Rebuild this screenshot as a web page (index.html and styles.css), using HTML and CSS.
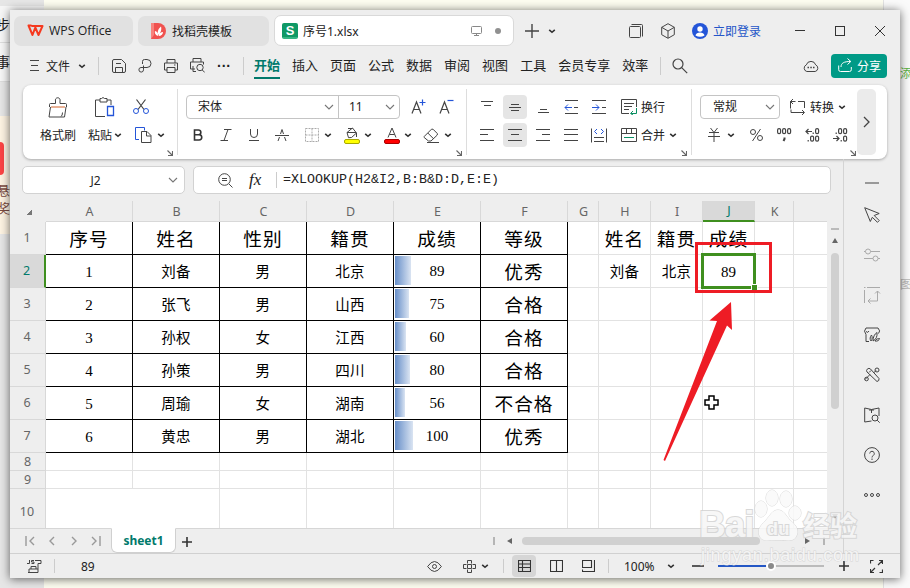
FILE: index.html
```html
<!DOCTYPE html>
<html lang="zh-CN">
<head>
    <meta charset="UTF-8">
    <meta name="viewport" content="width=device-width, initial-scale=1.0">
    <title>序号1.xlsx - WPS Office</title>
    <link rel="stylesheet" href="styles.css">
</head>
<body>
    <svg class="defs">
        <symbol id="caret" viewBox="0 0 8 8"><path d="M1.2 2.8 4 5.3 6.800 2.800" fill="none" stroke="#333" stroke-width="1.600"/></symbol>
        <symbol id="chevron" viewBox="0 0 10 8"><path d="M1 2l4 4 4-4" fill="none" stroke="#777" stroke-width="1.1"/></symbol>
        <symbol id="corner" viewBox="0 0 6 6"><path d="M.5.500 5 5M5.500 1v4.500H1" fill="none" stroke="#666" stroke-width="1.100"/></symbol>
    </svg>

    <!-- страница позади окна -->
    <div class="desktop">
        <div class="desk-left">
            <div class="step">步骤</div>
            <div class="note">事项</div>
            <div class="gray"></div>
            <div class="promo"><i></i><span>悬</span><span>奖</span></div>
        </div>
        <div class="desk-mid"></div>
        <div class="desk-right"><span class="add">添</span><span class="pic">图</span></div>
    </div>

    <div class="window">
        <header class="titlebar">
            <div class="tab tab-home">
                <svg width="17" height="13" viewBox="0 0 17 13" fill="none" stroke="#f5391f" stroke-width="2" stroke-linejoin="round"><path d="M4.500 2H15.500L11.500 11 8.300 3.500 5.500 11 1.500 1.500H4.500"/></svg>
                <span>WPS Office</span>
            </div>
            <div class="tab tab-docer">
                <svg width="15" height="16" viewBox="0 0 15 16"><path d="M0 0h7a8 8 0 0 1 0 16H0z" fill="#f0524f"/><path d="M0 0h3v12l-3 4z" fill="#f8827c"/><path d="M7 13C4 12 3.500 9.500 4 8c2 .5 3 2 3 5zM7 12C6 8 8 5 10 3.500 11 7 9.500 10.500 7 12zM7.500 13c.5-3 2.500-4 4.500-4 0 2-1.500 4-4.500 4z" fill="#fff"/></svg>
                <span>找稻壳模板</span>
            </div>
            <div class="tab tab-file">
                <span class="s-logo">S</span>
                <span class="file-name">序号1.xlsx</span>
                <svg width="11" height="10" viewBox="0 0 11 10" fill="none" stroke="#888"><rect x=".5" y=".5" width="10" height="7" rx="1"/><path d="M5.500 7.500v2M3 9.500h5"/></svg>
                <i class="dirty"></i>
            </div>
            <div class="new-tab">
                <svg width="14" height="14" viewBox="0 0 14 14" stroke="#444" stroke-width="1.400"><path d="M7 0v14M0 7h14"/></svg>
                <svg width="8" height="8"><use href="#caret"/></svg>
            </div>
            <div class="win-tools">
                <svg width="14" height="14" viewBox="0 0 14 14" fill="none" stroke="#444"><rect x=".5" y="2.500" width="11" height="11" rx="1"/><path d="M2.500.5h10a1 1 0 0 1 1 1v11"/></svg>
                <svg width="14" height="16" viewBox="0 0 14 16" fill="none" stroke="#444"><path d="M7 .7l6.300 3.600v7.400L7 15.300.700 11.700V4.300zM.700 4.300 7 8l6.300-3.700M7 8v7"/></svg>
                <a class="login" href="#"><svg width="16" height="16" viewBox="0 0 16 16"><circle cx="8" cy="8" r="8" fill="#2455d8"/><circle cx="8" cy="6" r="2.700" fill="#fff"/><path d="M3.500 12.500c.5-4 8.500-4 9 0q-4.500 2.600-9 0z" fill="#fff"/></svg>立即登录</a>
            </div>
            <div class="win-buttons">
                <svg width="10" height="10" viewBox="0 0 10 10" stroke="#333"><path d="M0 4.500h10"/></svg>
                <svg width="10" height="10" viewBox="0 0 10 10" fill="none" stroke="#333"><rect x=".5" y=".5" width="9" height="9"/></svg>
                <svg width="10" height="10" viewBox="0 0 10 10" stroke="#333"><path d="M0 0l10 10M10 0L0 10"/></svg>
            </div>
        </header>

        <nav class="menubar">
            <svg class="burger" width="9" height="11" viewBox="0 0 9 11" stroke="#444"><path d="M0 .5h9M1 5.500h7M0 10.500h9"/></svg>
            <span class="file-menu">文件</span>
            <svg width="8" height="8"><use href="#caret"/></svg>
            <i class="sep sep-file"></i>
            <div class="quick">
                <svg width="14" height="14" viewBox="0 0 14 14" fill="none" stroke="#444"><path d="M.5 12V2A1.500 1.500 0 0 1 2 .5h7.500l4 4V12a1.500 1.500 0 0 1-1.500 1.500H2A1.500 1.500 0 0 1 .5 12zM3.500 13.500V8.500h7v5M4 4.500h5"/></svg>
                <svg width="14" height="14" viewBox="0 0 14 14" fill="none" stroke="#444"><path d="M4.500 5V2.500q0-2 2-2h2.500a4 4 0 0 1 0 8H3a2.300 2.300 0 1 0 2.500 2.300V6.500"/></svg>
                <svg width="14" height="14" viewBox="0 0 14 14" fill="none" stroke="#444"><path d="M3 4V.500h8V4M3 11H.500V4h13v7H11M3 8.500h8v5H3zM10 6h1.500"/></svg>
                <svg width="15" height="15" viewBox="0 0 15 15" fill="none" stroke="#444"><path d="M3 4V.500h8V4M5 11H.500V4h13v2.500M3 8v5.500h3"/><circle cx="10" cy="9.500" r="3.200"/><path d="M12.300 12l2.500 2.500"/></svg>
                <span class="dots">···</span>
            </div>
            <i class="sep"></i>
            <ul>
                <li class="current">开始</li>
                <li>插入</li>
                <li>页面</li>
                <li>公式</li>
                <li>数据</li>
                <li>审阅</li>
                <li>视图</li>
                <li>工具</li>
                <li>会员专享</li>
                <li>效率</li>
            </ul>
            <i class="sep"></i>
            <svg class="search" width="16" height="16" viewBox="0 0 16 16" fill="none" stroke="#444" stroke-width="1.200"><circle cx="6" cy="6" r="5"/><path d="M9.700 9.700l5.500 5.500"/></svg>
            <svg class="cloud" width="16" height="14" viewBox="0 0 16 14" fill="none" stroke="#444"><path d="M3.800 12.500a3.500 3.500 0 0 1-.5-6.600 4.900 4.900 0 0 1 9.400 0 3.500 3.500 0 0 1-.5 6.600z"/><path d="M4.500 8.500H6M7.300 8.500h1.500M10 8.500h1.500" stroke-width="1.500"/></svg>
            <button class="share"><svg width="14" height="14" viewBox="0 0 14 14" fill="none" stroke="#fff"><path d="M.7 7.500v4.200a1.800 1.800 0 0 0 1.800 1.800h9a1.800 1.800 0 0 0 1.800-1.800V9M3 9c0-4 3-5.500 9.500-5.500M9.500.5l3.300 3-3.300 3"/></svg>分享</button>
        </nav>

        <section class="ribbon">
            <div class="group g-clip">
                <div class="big">
                    <svg width="20" height="21" viewBox="0 0 20 21" fill="none" stroke="#444"><path d="M1.500 10V7.500q0-1 1-1h5V4a2.400 2.400 0 1 1 4.500 0v2.500h5.500q1 0 1 1V10M2.500 10 1 20h15.500l1.500-10"/><path d="M13 19.500q1.500-1 1.500-4"/><path d="M3 10h14" stroke="#d2622a"/></svg>
                    <span>格式刷</span>
                </div>
                <div class="big">
                    <svg width="20" height="21" viewBox="0 0 20 21" fill="none" stroke="#444"><path d="M5 3H.500v16.500H10M12 3h4v5M5 1.500h1.500Q8-.5 9.500 1.500H12V5H5z"/><path d="M12.500 9.500h6v9h-6z" stroke="#2455d8" stroke-width="1.300"/></svg>
                    <span>粘贴<svg width="8" height="8"><use href="#caret"/></svg></span>
                </div>
                <div class="stack">
                    <div class="tb cut"><svg width="16" height="16" viewBox="0 0 16 16" fill="none"><path d="M3.500.5l7.500 10M12.500.5L5 10.500" stroke="#444" stroke-width="1.200"/><circle cx="3" cy="12" r="2.500" stroke="#2455d8"/><circle cx="13" cy="12" r="2.500" stroke="#2455d8"/></svg></div>
                    <div class="tb copy"><svg width="17" height="16" viewBox="0 0 17 16" fill="none"><path d="M4 12.500H.500v-12h9v3" stroke="#2455d8"/><path d="M6.500 4.500H12l4 4v7H6.500zM11.500 4.500V9H16" stroke="#444"/></svg><svg width="8" height="8"><use href="#caret"/></svg></div>
                </div>
                <svg class="corner" width="6" height="6"><use href="#corner"/></svg>
            </div>

            <div class="group g-font">
                <div class="row">
                    <div class="combo">
                        <div class="font-name">宋体<svg width="10" height="8"><use href="#chevron"/></svg></div>
                        <div class="font-size">11<svg width="10" height="8"><use href="#chevron"/></svg></div>
                    </div>
                    <div class="tb"><svg width="16" height="16" viewBox="0 0 16 16" fill="none"><path d="M1 14.500 5.500 3 10 14.500M2.500 10.500h6" stroke="#444" stroke-width="1.200"/><path d="M8.500 3.500h6M11.500.5v6" stroke="#2455d8" stroke-width="1.200"/></svg></div>
                    <div class="tb"><svg width="16" height="16" viewBox="0 0 16 16" fill="none"><path d="M1 14.500 5.500 3 10 14.500M2.500 10.500h6" stroke="#444" stroke-width="1.200"/><path d="M8.500 1.500h6" stroke="#2455d8" stroke-width="1.200"/></svg></div>
                </div>
                <div class="row">
                    <div class="tb"><svg width="10" height="12" viewBox="0 0 10 12" fill="none" stroke="#333" stroke-width="1.600"><path d="M1.500 1h4a2.300 2.300 0 0 1 0 4.700h-4zM1.500 5.700h4.600a2.600 2.600 0 0 1 0 5.300H1.500z"/></svg></div>
                    <div class="tb"><svg width="12" height="12" viewBox="0 0 12 12" fill="none" stroke="#444"><path d="M4 .5h7.500M.5 11.500H8M8 .5l-4 11"/></svg></div>
                    <div class="tb"><svg width="10" height="12" viewBox="0 0 10 12" fill="none" stroke="#444"><path d="M1.500 0v5a3.500 3.500 0 0 0 7 0V0M0 11.500h10"/></svg></div>
                    <div class="tb"><svg width="14" height="12" viewBox="0 0 14 12" fill="none" stroke="#444"><path d="M3 12l1.500-4M5.500 5L7 .5 8.500 5M9.500 8l1.500 4M0 6.500h14"/></svg></div>
                    <div class="tb drop first-drop"><svg width="14" height="14" viewBox="0 0 14 14" fill="none" stroke="#aaa" stroke-dasharray="2 1"><path d="M.5.5h13v13H.500zM7 .5v13M.5 7h13"/></svg><svg width="8" height="8"><use href="#caret"/></svg></div>
                    <div class="tb drop"><svg width="16" height="17" viewBox="0 0 16 17" fill="none" stroke="#444"><path d="M3 5.500 8.500 1l4 5-5 4.500-3 .2zM3 5.500h9M4 1.500h4.500M12.500 6v4"/><rect x=".5" y="12.500" width="15" height="4" rx="1.500" fill="#ff0" stroke="#a8a800"/></svg><svg width="8" height="8"><use href="#caret"/></svg></div>
                    <div class="tb drop"><svg width="16" height="17" viewBox="0 0 16 17" fill="none" stroke="#444"><path d="M4 10.500 8 1l4 9.500M5.500 7.500h5"/><rect x=".5" y="12.500" width="15" height="4" rx="1.500" fill="#f00" stroke="#a80000"/></svg><svg width="8" height="8"><use href="#caret"/></svg></div>
                    <div class="tb drop"><svg width="18" height="15" viewBox="0 0 18 15" fill="none" stroke="#444"><path d="M1.200 8.500 8.500 1.200h1.500l4.300 4.300v1.500L8 13H5.500L1.200 9.500zM4.800 5l6 6M4 14.500h12"/></svg><svg width="8" height="8"><use href="#caret"/></svg></div>
                </div>
                <svg class="corner" width="6" height="6"><use href="#corner"/></svg>
            </div>

            <div class="group g-align">
                <div class="row">
                    <div class="tb"><svg width="14" height="14" viewBox="0 0 14 14" stroke="#444"><path d="M1 1.500h12M4 5.500h7"/></svg></div>
                    <div class="tb on"><svg width="14" height="14" viewBox="0 0 14 14" stroke="#444"><path d="M3 4.500h8M1 7.500h12M3 10.500h8"/></svg></div>
                    <div class="tb"><svg width="14" height="14" viewBox="0 0 14 14" stroke="#444"><path d="M4 9.500h7M2 12.500h11"/></svg></div>
                    <div class="tb"><svg width="14" height="14" viewBox="0 0 14 14" fill="none" stroke="#444"><path d="M1 .5h13M1 13.500h13M10 7.500h4"/><path d="M8 7.500H1M4 4.500l-3 3 3 3" stroke="#2455d8"/></svg></div>
                    <div class="tb"><svg width="14" height="14" viewBox="0 0 14 14" fill="none" stroke="#444"><path d="M0 .5h14M0 13.500h14M10 7.500h4"/><path d="M0 7.500h7M4 4.500l3 3-3 3" stroke="#2455d8"/></svg></div>
                    <div class="tb wide"><svg width="16" height="16" viewBox="0 0 16 16" fill="none" stroke="#444"><path d="M8 14.500H.500V.5h15V8M3 4.500h10M3 7.500h8M3 10.500h5"/><path d="M15.500 9v5.500H10M12 12l-2.500 2.500L12 16" stroke="#0a8f62"/></svg>换行</div>
                </div>
                <div class="row">
                    <div class="tb"><svg width="14" height="12" viewBox="0 0 14 12" stroke="#444"><path d="M0 .5h14M0 5.500h8M0 11.500h14"/></svg></div>
                    <div class="tb on"><svg width="14" height="12" viewBox="0 0 14 12" stroke="#444"><path d="M0 .5h14M3 5.500h8M0 11.500h14"/></svg></div>
                    <div class="tb"><svg width="14" height="12" viewBox="0 0 14 12" stroke="#444"><path d="M0 .5h14M6 5.500h8M0 11.500h14"/></svg></div>
                    <div class="tb"><svg width="14" height="12" viewBox="0 0 14 12" stroke="#444"><path d="M0 .5h14M0 5.500h14M0 11.500h14"/></svg></div>
                    <div class="tb"><svg width="16" height="15" viewBox="0 0 16 15" fill="none" stroke="#444"><path d="M.5.5v14M15.500.5v14M3 9.500h10M3 13.500h10"/><path d="M6 1L3.500 3.500 6 6M10 1l2.500 2.500L10 6" stroke="#2455d8"/></svg></div>
                    <div class="tb wide"><svg width="16" height="14" viewBox="0 0 16 14" fill="none" stroke="#444"><path d="M.5.5h15v13H.500zM.5 5.500h15M5.500.5v5M10.500.5v5"/><path d="M3 9.500h10" stroke="#0a8f62"/></svg>合并<svg width="8" height="8"><use href="#caret"/></svg></div>
                </div>
                <svg class="corner" width="6" height="6"><use href="#corner"/></svg>
            </div>

            <div class="group g-num">
                <div class="row">
                    <div class="combo num-format">常规<svg width="10" height="8"><use href="#chevron"/></svg></div>
                    <div class="tb wide"><svg width="16" height="16" viewBox="0 0 16 16" fill="none" stroke="#444"><path d="M.5 9.500v-7h5M3 0L.500 2.500 3 5M8 2.500h6.500V9M1 10.500v3h13M12 11l2.500 2.500L12 16"/></svg>转换<svg width="8" height="8"><use href="#caret"/></svg></div>
                </div>
                <div class="row">
                    <div class="tb drop"><svg width="12" height="14" viewBox="0 0 12 14" fill="none" stroke="#444"><path d="M2.500 0 6 4.500 9.500 0M1 4.500h10M0 8.500h12M6 4.500V14"/></svg><svg width="8" height="8"><use href="#caret"/></svg></div>
                    <div class="tb"><svg width="13" height="12" viewBox="0 0 13 12" fill="none" stroke="#444"><circle cx="3" cy="3" r="2.500"/><circle cx="10" cy="9" r="2.500"/><path d="M10.500 0l-8 12"/></svg></div>
                    <div class="tb"><svg width="15" height="14" viewBox="0 0 15 14" fill="none" stroke="#444" stroke-width="1.200"><rect x=".6" y=".6" width="3" height="5" rx="1.400"/><rect x="5.600" y=".6" width="3" height="5" rx="1.400"/><rect x="10.600" y=".6" width="3" height="5" rx="1.400"/><path d="M7.500 9.500v1.500l-1 2" stroke-width="2"/></svg></div>
                    <div class="tb"><svg width="15" height="14" viewBox="0 0 15 14" fill="none" stroke="#444" stroke-width="1.200"><path d="M7 3.500H1M3.500 1 1 3.500 3.500 6M8.200 4.500V6M3.200 12v1.500"/><rect x="10.600" y=".6" width="3" height="5" rx="1.400"/><rect x="5.600" y="8.100" width="3" height="5" rx="1.400"/><rect x="10.600" y="8.100" width="3" height="5" rx="1.400"/></svg></div>
                    <div class="tb"><svg width="15" height="14" viewBox="0 0 15 14" fill="none" stroke="#444" stroke-width="1.200"><path d="M0 10.500h6M3.500 8 6 10.500 3.500 13M3.200 4.500V6M8.200 12v1.500"/><rect x="5.600" y=".6" width="3" height="5" rx="1.400"/><rect x="10.600" y=".6" width="3" height="5" rx="1.400"/><rect x="10.600" y="8.100" width="3" height="5" rx="1.400"/></svg></div>
                </div>
                <svg class="corner" width="6" height="6"><use href="#corner"/></svg>
            </div>
            <div class="more"><svg width="7" height="12" viewBox="0 0 7 12" fill="none" stroke="#444" stroke-width="1.300"><path d="M1 1l5 5-5 5"/></svg></div>
        </section>

        <div class="work">
            <div class="editor">
                <div class="formula-bar">
                    <div class="name-box"><span>J2</span><svg width="10" height="8"><use href="#chevron"/></svg></div>
                    <div class="formula">
                        <svg width="15" height="15" viewBox="0 0 15 15" fill="none" stroke="#444"><circle cx="6.500" cy="6.500" r="5.800"/><path d="M4 5.500h5M4 7.500h5M11 11l3.500 3.500"/></svg>
                        <span class="fx">fx</span>
                        <code>=XLOOKUP(H2&amp;I2,B:B&amp;D:D,E:E)</code>
                    </div>
                </div>
                <div class="sheet">
                    <table>
                        <colgroup>
                            <col class="c-head"><col class="c-l"><col class="c-l"><col class="c-l"><col class="c-l"><col class="c-l"><col class="c-l">
                            <col class="c-g"><col class="c-m"><col class="c-m"><col class="c-m"><col class="c-k"><col class="c-rest">
                        </colgroup>
                        <tr class="letters">
                            <th><i class="select-all"></i></th>
                            <th>A</th><th>B</th><th>C</th><th>D</th><th>E</th><th>F</th><th>G</th><th>H</th><th>I</th><th class="sel">J</th><th>K</th><th></th>
                        </tr>
                        <tr class="title">
                            <th>1</th>
                            <td class="b">序号</td><td class="b">姓名</td><td class="b">性别</td><td class="b">籍贯</td><td class="b">成绩</td><td class="b">等级</td>
                            <td></td><td>姓名</td><td>籍贯</td><td>成绩</td><td></td><td></td>
                        </tr>
                        <tr>
                            <th class="sel">2</th>
                            <td class="b n">1</td><td class="b">刘备</td><td class="b">男</td><td class="b">北京</td>
                            <td class="b n"><div class="score"><i style="width: 16px"></i><span>89</span></div></td><td class="b grade">优秀</td>
                            <td></td><td>刘备</td><td>北京</td><td class="n">89</td><td></td><td></td>
                        </tr>
                        <tr>
                            <th>3</th>
                            <td class="b n">2</td><td class="b">张飞</td><td class="b">男</td><td class="b">山西</td>
                            <td class="b n"><div class="score"><i style="width: 14px"></i><span>75</span></div></td><td class="b grade">合格</td>
                            <td></td><td></td><td></td><td></td><td></td><td></td>
                        </tr>
                        <tr>
                            <th>4</th>
                            <td class="b n">3</td><td class="b">孙权</td><td class="b">女</td><td class="b">江西</td>
                            <td class="b n"><div class="score"><i style="width: 11px"></i><span>60</span></div></td><td class="b grade">合格</td>
                            <td></td><td></td><td></td><td></td><td></td><td></td>
                        </tr>
                        <tr>
                            <th>5</th>
                            <td class="b n">4</td><td class="b">孙策</td><td class="b">男</td><td class="b">四川</td>
                            <td class="b n"><div class="score"><i style="width: 15px"></i><span>80</span></div></td><td class="b grade">合格</td>
                            <td></td><td></td><td></td><td></td><td></td><td></td>
                        </tr>
                        <tr>
                            <th>6</th>
                            <td class="b n">5</td><td class="b">周瑜</td><td class="b">女</td><td class="b">湖南</td>
                            <td class="b n"><div class="score"><i style="width: 10px"></i><span>56</span></div></td><td class="b grade">不合格</td>
                            <td></td><td></td><td></td><td></td><td></td><td></td>
                        </tr>
                        <tr>
                            <th>7</th>
                            <td class="b n">6</td><td class="b">黄忠</td><td class="b">男</td><td class="b">湖北</td>
                            <td class="b n"><div class="score"><i style="width: 18px"></i><span>100</span></div></td><td class="b grade">优秀</td>
                            <td></td><td></td><td></td><td></td><td></td><td></td>
                        </tr>
                        <tr class="low"><th>8</th><td></td><td></td><td></td><td></td><td></td><td></td><td></td><td></td><td></td><td></td><td></td><td></td></tr>
                        <tr class="low"><th>9</th><td></td><td></td><td></td><td></td><td></td><td></td><td></td><td></td><td></td><td></td><td></td><td></td></tr>
                        <tr class="last"><th>10</th><td colspan="2"></td><td></td><td></td><td></td><td></td><td></td><td></td><td></td><td></td><td></td><td></td></tr>
                    </table>
                    <div class="vscroll">
                        <i class="split"></i>
                        <i class="up"></i>
                        <i class="thumb"></i>
                        <i class="down"></i>
                    </div>
                </div>
                <div class="sheet-tabs">
                    <div class="sheet-nav">
                        <svg width="10" height="10" viewBox="0 0 10 10"><path d="M1 0v10M9 1L5 5l4 4"/></svg>
                        <svg width="10" height="10" viewBox="0 0 10 10"><path d="M7 1L3 5l4 4"/></svg>
                        <svg width="10" height="10" viewBox="0 0 10 10"><path d="M3 1l4 4-4 4"/></svg>
                        <svg width="10" height="10" viewBox="0 0 10 10"><path d="M9 0v10M1 1l4 4-4 4"/></svg>
                    </div>
                    <div class="sheet-tab">sheet1</div>
                    <svg class="add-sheet" width="10" height="10" viewBox="0 0 10 10" stroke="#333" stroke-width="1.600"><path d="M5 0v10M0 5h10"/></svg>
                    <div class="hscroll">
                        <i class="grip"></i>
                        <i class="left"></i>
                        <i class="thumb"></i>
                        <i class="right"></i>
                        <i class="grip"></i>
                    </div>
                </div>
            </div>
            <aside class="rail">
                <svg class="fold" viewBox="0 0 16 16"><path d="M1 8h14"/></svg>
                <svg viewBox="0 0 16 16"><path d="M.7.700l14.500 5.800-5 2 5 5-1.700 1.800-5.200-5-2 4.200z"/></svg>
                <svg class="dim" viewBox="0 0 16 16"><circle cx="4" cy="4.500" r="2.500"/><circle cx="11.500" cy="11.500" r="2.500"/><path d="M0 4.500h1.500M6.500 4.500H16M0 11.500h9M14 11.500h2"/></svg>
                <svg class="dim" viewBox="0 0 16 16"><path d="M.5 3v13M3 .5h13M0 .5h1.500M13.500 4v10H4M11 6.500 13.500 4 16 6.500M6.500 11.500 4 14l2.500 2.500"/></svg>
                <svg viewBox="0 0 16 16"><path d="M5 14.500H2V7.500Q-1 4 2 1h12Q17 4 14.500 6.500M2 4.500q2 2 3-.5M7 14c-1.500-2-1-4 .5-6 1 2 1 4-.5 6zM9 14c0-4 1.500-7 4-8.500.5 4-1 7-4 8.500zM11 14c1-2 3-2.500 4.500-2.500-.5 2-2 3-4.500 2.500z"/></svg>
                <svg viewBox="0 0 16 16"><path d="M3.200 2.200Q5 .5 6.500 2l8.500 9.500q.5 2.500-2 3L3 5Q2 3.500 3.200 2.200zM5 5.500 7 3.500M1 12.500l5-5M9.500 6 12 3.500"/><circle cx="13" cy="3" r="2"/><circle cx="2.500" cy="12" r="1.800"/></svg>
                <svg viewBox="0 0 16 16"><path d="M7.500 14 .700 15V1L7.500 2.500 15 1v8M7.500 2.500V6M5 3h5"/><circle cx="11" cy="11" r="3"/><path d="M13.200 13.200l2.500 2.500"/></svg>
                <svg viewBox="0 0 16 16"><circle cx="8" cy="8" r="7.400"/><path d="M5.700 6.500a2.300 2.300 0 1 1 3.600 2Q8 9.200 8 10.500M8 11.500v1.500"/></svg>
                <svg viewBox="0 0 16 16"><circle cx="2" cy="8" r="1.500"/><circle cx="8" cy="8" r="1.500"/><circle cx="14" cy="8" r="1.500"/></svg>
            </aside>
        </div>

        <footer class="status">
            <svg class="macro" width="15" height="13" viewBox="0 0 15 13" fill="none" stroke="#444"><path d="M2.500 0v3.500H0M7 .5H4.500v1.500H7v1.500H4.500M8 .5h6v3h-3v9H2V9h9M4 9V6.500h5V9M1 12.500h10"/></svg>
            <i class="sep"></i>
            <span class="sum">89</span>
            <svg width="15" height="11" viewBox="0 0 15 11" fill="none" stroke="#444"><path d="M.6 5.500q6.900-10 13.800 0-6.900 10-13.800 0z"/><circle cx="7.500" cy="5.500" r="2"/></svg>
            <svg class="cross" width="13" height="13" viewBox="0 0 13 13" fill="none" stroke="#444"><path d="M4.500 3.500v-3h4v3M4.500 9.500v3h4v-3M3.500 4.500h-3v4h3M9.500 4.500h3v4h-3M4.500 4.500h4v4h-4z"/></svg>
            <svg class="cross-caret" width="8" height="8"><use href="#caret"/></svg>
            <i class="sep"></i>
            <div class="views">
                <div class="view on"><svg width="13" height="12" viewBox="0 0 13 12"><path d="M.5.5h12v11H.500zM.5 4h12M.5 7.500h12M4.500.5v11"/></svg></div>
                <div class="view"><svg width="13" height="12" viewBox="0 0 13 12"><path d="M.5.5h12v11H.500zM6.500.5v11"/></svg></div>
                <div class="view"><svg width="13" height="12" viewBox="0 0 13 12"><path d="M.5.5h9v7h-9zM12.500 0v11.500H0M.5 9.500v2"/></svg></div>
            </div>
            <i class="sep"></i>
            <span class="zoom">100%</span>
            <svg width="8" height="8"><use href="#caret"/></svg>
            <svg class="minus" width="12" height="4" viewBox="0 0 12 4" stroke="#333" stroke-width="1.600"><path d="M0 2h12"/></svg>
            <div class="slider"><i class="done"></i><i class="knob"></i></div>
            <svg class="plus" width="10" height="10" viewBox="0 0 10 10" stroke="#333" stroke-width="1.600"><path d="M5 0v10M0 5h10"/></svg>
            <svg class="full" width="13" height="13" viewBox="0 0 13 13" fill="none" stroke="#333" stroke-width="1.200"><path d="M.5 3.500v-3h3M12.500 9.500v3h-3M9 .5h3.500V4M12.500.5 8 5M.5 9v3.500H4M.5 12.500 5 8"/></svg>
        </footer>
    </div>

    <!-- выделение и стрелка поверх листа -->
    <svg class="marks" width="910" height="588" viewBox="0 0 910 588">
        <rect x="702.500" y="254.500" width="52" height="33" fill="none" stroke="#3f8f1f" stroke-width="3"/>
        <path d="M751 284h7v7h-7z" fill="#fff"/>
        <path d="M752 285h5v5h-5z" fill="#3f8f1f"/>
        <rect x="696.500" y="243.500" width="74" height="48" fill="none" stroke="#ee1c25" stroke-width="3"/>
        <path d="M731 302l1 28-5-4.500L665 461l-1.500-1L717 321l-7.500-.5z" fill="#ee1c25"/>
        <path d="M709 396h5v4h4v5h-4v4h-5v-4h-4v-5h4z" fill="#fff" stroke="#000" stroke-width="1.500"/>
    </svg>

    <div class="watermark">
        <div class="brand">
            <span class="bai">Bai</span>
            <span class="paw"><svg width="50" height="54" viewBox="0 0 50 54"><ellipse cx="8" cy="20" rx="6" ry="8"/><ellipse cx="19" cy="9" rx="6" ry="8"/><ellipse cx="33" cy="10" rx="6" ry="8"/><ellipse cx="42" cy="24" rx="6" ry="7"/><path d="M25 21c6 0 8 6 12 10 8 7 9 11 6 17-3 5-9 3-18 3s-15 2-18-3c-3-6-1-10 6-17 4-4 6-10 12-10z"/></svg><b>du</b></span>
            <span class="jy">经验</span>
        </div>
        <div class="url">jingyan.baidu.com</div>
    </div>
</body>
</html>
```
FILE: styles.css
```css
* {
    margin: 0;
    padding: 0;
    box-sizing: border-box;
}

body {
    position: relative;
    width: 910px;
    height: 588px;
    overflow: hidden;
    font-family: "Noto Sans", "Noto Sans CJK SC", sans-serif;
    font-size: 12px;
    color: #222;
}

svg {
    display: block;
    flex: none;
}

.defs {
    position: absolute;
    width: 0;
    height: 0;
}

/* Фон */
.desktop {
    display: grid;
    grid-template-columns: 44px 839px 1fr;
    height: 588px;
}

.desk-left {
    background: #e6e6e6;
    padding-top: 6px;
    font-size: 14px;
    overflow: hidden;
}

.step, .note {
    height: 37px;
    line-height: 37px;
    margin-left: -4px;
    background: #f6f6f6;
    border-bottom: 1px solid #ddd;
    white-space: nowrap;
}

.note {
    height: 39px;
}

.gray {
    height: 34px;
}

.promo {
    height: 118px;
    background: #fdf3e2;
    color: #7a4a40;
    font-size: 13px;
    line-height: 18px;
}

.promo i {
    display: block;
    width: 4px;
    height: 33px;
    margin-bottom: 6px;
    border-radius: 0 4px 4px 0;
    background: #fb4444;
    transform: translateY(26px);
}

.promo span {
    display: block;
    margin-left: -3px;
    transform: translateY(26px);
}

.desk-mid {
    background: #fdfdf0;
}

.desk-right {
    background: #fafafa;
    border-left: 1px solid #e2e2e2;
    padding: 64px 0 0 16px;
    font-size: 12px;
    line-height: 20px;
    overflow: hidden;
}

.desk-right span {
    display: block;
    width: 14px;
}

.add {
    color: #5bb544;
}

.pic {
    margin-top: 191px;
    color: #bbb;
}

/* Окно */
.window {
    position: absolute;
    left: 10px;
    top: 10px;
    width: 890px;
    height: 568px;
    display: flex;
    flex-direction: column;
    background: #eee;
    box-shadow: 0 1px 9px rgba(0, 0, 0, 0.6);
}

.titlebar {
    display: flex;
    align-items: center;
    height: 36px;
    padding: 5px 0 0 4px;
    flex: none;
}

.tab {
    display: flex;
    align-items: center;
    height: 30px;
    margin-right: 5px;
    padding-left: 13px;
    border-radius: 7px;
    background: #e1e1e1;
}

.tab-home {
    width: 119px;
    font-family: "Open Sans", sans-serif;
    font-size: 12.3px;
}

.tab-home span {
    margin-left: 5px;
}

.tab-docer {
    width: 131px;
}

.tab-docer span {
    margin-left: 6px;
}

.tab-file {
    width: 240px;
    height: 31px;
    margin-right: 0;
    padding-left: 7px;
    background: #fff;
    border: 1px solid #d9d9d9;
}

.s-logo {
    width: 16px;
    height: 16px;
    border-radius: 2px;
    background: #0f9966;
    border-bottom: 2px solid #35b583;
    color: #fff;
    font: bold 13px/15px "Liberation Sans", sans-serif;
    text-align: center;
}

.file-name {
    width: 168px;
    margin-left: 5px;
    font-size: 12px;
}

.dirty {
    width: 6px;
    height: 6px;
    margin-left: 13px;
    border-radius: 50%;
    background: #909090;
}

.new-tab {
    display: flex;
    align-items: center;
    gap: 9px;
    margin-left: 11px;
}

.win-tools {
    display: flex;
    align-items: center;
    gap: 18px;
    margin-left: 73px;
}

.login {
    display: flex;
    align-items: center;
    gap: 5px;
    margin-left: -1px;
    color: #2455c8;
    text-decoration: none;
}

.win-buttons {
    display: flex;
    gap: 30px;
    margin-left: 34px;
}

/* Меню */
.menubar {
    display: flex;
    align-items: center;
    height: 39px;
    padding: 0 13px 0 20px;
    flex: none;
}

.file-menu {
    margin: 0 8px 0 7px;
}

.sep {
    width: 1px;
    height: 18px;
    background: #ccc;
    flex: none;
}

.sep-file {
    margin-left: 12px;
}

.quick {
    display: flex;
    align-items: center;
    gap: 12px;
    margin: 0 12px 0 13px;
}

.dots {
    width: 14px;
    font: bold 14px/14px "Liberation Sans", sans-serif;
}

.menubar ul {
    display: flex;
    gap: 12px;
    margin: 0 12px 0 10px;
    list-style: none;
    font-size: 13px;
}

.menubar li {
    height: 27px;
    line-height: 27px;
    white-space: nowrap;
}

.menubar .current {
    border-bottom: 2px solid #00796b;
    color: #00796b;
    font-weight: bold;
}

.search {
    margin-left: 11px;
}

.cloud {
    margin-left: auto;
}

.share {
    display: flex;
    align-items: center;
    gap: 5px;
    width: 56px;
    height: 24px;
    margin-left: 12px;
    padding: 0 0 1px 7px;
    border: 0;
    border-radius: 4px;
    background: #009a86;
    color: #fff;
    font: 12px "Noto Sans CJK SC", sans-serif;
    white-space: nowrap;
}

/* Лента */
.ribbon {
    display: flex;
    height: 74px;
    margin: 0 13px;
    padding: 4px 0;
    border-radius: 8px;
    background: #fff;
    box-shadow: 0 1px 3px rgba(0, 0, 0, 0.3);
    flex: none;
}

.group {
    display: grid;
    grid-template-rows: 24px 24px 6px;
    row-gap: 4px;
    align-content: start;
    padding-top: 6px;
    border-right: 1px solid #ddd;
}

.corner {
    justify-self: end;
    margin: -1px 4px 0 0;
    grid-column: -2;
}

.row {
    display: flex;
    align-items: center;
}

.tb {
    display: flex;
    align-items: center;
    justify-content: center;
    width: 28px;
    height: 24px;
}

.tb.on {
    width: 24px;
    margin: 0 2px;
    border-radius: 4px;
    background: #e5e5e5;
}

.tb.wide {
    width: auto;
    gap: 4px;
    white-space: nowrap;
}

.g-clip {
    width: 155px;
    grid-template-columns: 44px 50px 1fr;
    padding-left: 13px;
}

.big {
    grid-row: 1 / 3;
    display: grid;
    grid-template-rows: 24px 24px;
    row-gap: 4px;
    align-items: center;
    justify-items: center;
}

.big span {
    display: flex;
    align-items: center;
    gap: 2px;
    white-space: nowrap;
}

.stack {
    grid-row: 1 / 3;
    display: grid;
    row-gap: 4px;
    padding-left: 4px;
}

.stack .cut {
    width: 16px;
    margin-left: -1px;
}

.stack .copy {
    width: 32px;
    gap: 5px;
}

.g-clip .corner {
    grid-row: 3;
}

.g-font {
    width: 289px;
    padding-left: 6px;
}

.combo {
    display: flex;
    height: 24px;
    border: 1px solid #c4c4c4;
    border-radius: 4px;
    line-height: 22px;
}

.combo > div, .num-format {
    display: flex;
    align-items: center;
    justify-content: space-between;
    padding-right: 4px;
}

.g-font .combo {
    width: 214px;
    margin: 0 5px 0 2px;
}

.font-name {
    width: 152px;
    padding-left: 11px;
    border-right: 1px solid #c4c4c4;
}

.font-size {
    flex: 1;
    padding-left: 10px;
}

.first-drop {
    margin-left: 4px;
}

.g-font .drop {
    display: grid;
    grid-template-columns: 24px 8px;
    width: 40px;
    justify-content: start;
    justify-items: center;
}

.g-align {
    width: 225px;
    padding-left: 6px;
}

.g-align .wide {
    margin-left: 8px;
}

.g-num {
    width: 165px;
    padding-left: 8px;
    border-right: 0;
}

.num-format {
    width: 80px;
    margin-right: 10px;
    padding-left: 12px;
}

.g-num .drop {
    width: 42px;
    gap: 7px;
    padding-left: 1px;
}

.g-num .corner {
    margin-right: 1px;
}

.more {
    display: flex;
    align-items: center;
    justify-content: center;
    width: 19px;
    border-radius: 5px;
    background: #ebebeb;
}

/* Рабочая область */
.work {
    display: flex;
    height: 395px;
    flex: none;
    border-bottom: 1px solid #d0d0d0;
}

.editor {
    width: 833px;
}

.formula-bar {
    display: flex;
    gap: 8px;
    padding: 7px 0 7px 12px;
    height: 42px;
}

.name-box, .formula {
    display: flex;
    align-items: center;
    height: 28px;
    border: 1px solid #d2d2d2;
    border-radius: 5px;
    background: #fff;
}

.name-box {
    width: 163px;
    padding-right: 6px;
}

.name-box span {
    flex: 1;
    text-align: center;
}

.formula {
    width: 638px;
    padding-left: 24px;
}

.fx {
    width: 27px;
    margin-left: 16px;
    font: italic 17px "Liberation Serif", serif;
    line-height: 20px;
}

.formula code {
    padding-left: 6px;
    border-left: 1px solid #ccc;
    font: 13.330px/16px "Liberation Mono", monospace;
}

.sheet {
    display: flex;
    height: 327px;
}

table {
    width: 817px;
    table-layout: fixed;
    border-collapse: separate;
    border-spacing: 0;
    background: #fff;
}

.c-head { width: 36px; }
.c-l { width: 87px; }
.c-g { width: 31px; }
.c-m { width: 52px; }
.c-k { width: 39px; }
.c-rest { width: 33px; }

td, th {
    height: 33px;
    border-right: 1px solid #e2e2e2;
    border-bottom: 1px solid #e2e2e2;
    text-align: center;
    vertical-align: middle;
    white-space: nowrap;
    overflow: hidden;
}

td {
    padding-bottom: 1px;
    font: 14.500px/20px "Noto Sans CJK SC", sans-serif;
    letter-spacing: 0.300px;
    color: #000;
}

th {
    padding-right: 1px;
    background: #eee;
    border-color: #d8d8d8;
    font-weight: normal;
    font-size: 12.500px;
    line-height: 16px;
    color: #666;
}

td:last-child, .letters th:last-child {
    border-right: 0;
}

.letters th {
    height: 21px;
    padding: 1px 0 0 1px;
    line-height: 19px;
}

.letters th:first-child {
    border-color: #eee;
}

.select-all {
    display: block;
    width: 6px;
    height: 6px;
    margin-left: 15px;
    background: linear-gradient(135deg, transparent 50%, #777 50%);
}

.letters .sel {
    background: #d9d9d9;
    border-bottom: 2px solid #3f8f1f;
    line-height: 18px;
    color: #00796b;
}

tr:not(.letters) .sel {
    background: #d9d9d9;
    border-right: 2px solid #3f8f1f;
    color: #00796b;
}

.title td, td.grade {
    padding-bottom: 0;
    font-size: 18.700px;
    line-height: 26px;
    letter-spacing: 1px;
}

td.b {
    border-color: #000;
}

td.n {
    padding: 1px 0 0;
    font-family: "Liberation Serif", serif;
    font-size: 15px;
    letter-spacing: 0;
}

/* полоса и число лежат в одной ячейке сетки */
.score {
    display: grid;
    grid-template-areas: "v";
    height: 29px;
    margin-top: -2px;
}

.score i, .score span {
    grid-area: v;
}

.score i {
    height: 29px;
    margin-left: 1px;
    background: linear-gradient(90deg, #668ec8, #dae4f2);
}

.score span {
    line-height: 31px;
}

.low th, .low td {
    height: 18px;
    padding: 0;
    line-height: 15px;
}

.last th, .last td {
    height: 39px;
    border-bottom: 0;
}

.last th {
    padding-top: 6px;
}

.vscroll {
    display: flex;
    flex-direction: column;
    align-items: center;
    width: 16px;
    padding-top: 26px;
}

.split {
    width: 8px;
    height: 2px;
    margin-top: 1px;
    background: #bbb;
}

.up, .down {
    border: 3px solid transparent;
    border-top: 0;
    border-bottom: 5px solid #666;
    margin: 8px 0 10px;
}

.vscroll .thumb {
    width: 8px;
    height: 156px;
    border-radius: 4px;
    background: #d0d0d0;
}

.down {
    border-bottom: 0;
    border-top: 5px solid #666;
    margin: auto 0 9px;
}

.rail {
    display: flex;
    flex-direction: column;
    align-items: center;
    gap: 24px;
    width: 57px;
    padding-top: 16px;
    border-left: 1px solid #d4d4d4;
}

.rail svg {
    width: 16px;
    height: 16px;
    fill: none;
    stroke: #444;
    overflow: visible;
}

.rail .dim {
    stroke: #aaa;
}

.rail .fold {
    margin-bottom: -8px;
    stroke: #999;
    stroke-width: 2;
}

/* Вкладки листов */
.sheet-tabs {
    display: flex;
    align-items: center;
    height: 26px;
    padding-bottom: 2px;
    border-top: 1px solid #d6d6d6;
}

.sheet-nav {
    display: flex;
    gap: 12px;
    width: 101px;
    padding-left: 15px;
}

.sheet-nav path {
    fill: none;
    stroke: #999;
    stroke-width: 1.400;
}

.sheet-tab {
    width: 65px;
    height: 25px;
    margin-top: -1px;
    align-self: start;
    border: 1px solid #d0d0d0;
    border-top-color: #fff;
    border-radius: 0 0 6px 6px;
    background: #fff;
    color: #00796b;
    font-weight: bold;
    font-size: 12px;
    line-height: 23px;
    text-align: center;
}

.add-sheet {
    margin: 2px 0 0 6px;
}

.hscroll {
    display: flex;
    align-items: center;
    width: 332px;
    margin-left: auto;
    margin-right: 18px;
}

.grip {
    width: 2px;
    height: 8px;
    background: #b5b5b5;
}

.left, .right {
    border: 3px solid transparent;
    border-left: 0;
    border-right: 5px solid #666;
    margin: 0 10px 0 12px;
}

.hscroll .thumb {
    width: 238px;
    height: 8px;
    border-radius: 4px;
    background: #d0d0d0;
}

.right {
    border-right: 0;
    border-left: 5px solid #666;
    margin: 0 13px 0 auto;
}

/* Строка состояния */
.status {
    display: flex;
    align-items: center;
    flex: 1;
    padding-left: 17px;
}

.status .sep {
    height: 14px;
}

.macro {
    margin-right: 12px;
}

.sum {
    width: 372px;
    padding-left: 26px;
    font-size: 12px;
    flex: none;
}

.cross {
    margin-left: 21px;
}

.cross-caret {
    margin: 0 14px 0 5px;
}

.views {
    display: flex;
    gap: 8px;
    margin: 0 8px;
}

.view {
    display: flex;
    align-items: center;
    justify-content: center;
    width: 24px;
    height: 22px;
    border-radius: 4px;
}

.view.on {
    background: #d6d6d6;
}

.view path {
    fill: none;
    stroke: #333;
    stroke-width: 1.100;
}

.zoom {
    width: 43px;
    margin-left: 15px;
}

.minus {
    margin-left: 17px;
}

.slider {
    display: flex;
    align-items: center;
    width: 106px;
    height: 10px;
    margin-left: 14px;
    background: linear-gradient(#bbb, #bbb) center / 100% 2px no-repeat;
}

.done {
    width: 48px;
    height: 2px;
    background: #2457c5;
}

.knob {
    width: 10px;
    height: 10px;
    border: 2px solid #fff;
    border-radius: 50%;
    background: #8a8a8a;
}

.plus {
    margin-left: 15px;
}

.full {
    margin-left: 21px;
}

.marks {
    position: absolute;
    left: 0;
    top: 0;
}

/* Водяной знак */
.watermark {
    position: absolute;
    left: 699px;
    top: 490px;
    width: 165px;
    color: #f6f6f6;
    font-family: "Liberation Sans", "Noto Sans CJK SC", sans-serif;
    -webkit-text-stroke: 2px #d2d2d2;
    paint-order: stroke fill;
    opacity: 0.85;
}

.brand {
    display: flex;
    align-items: flex-end;
    height: 53px;
    font-weight: bold;
}

.bai {
    width: 54px;
    font-size: 37px;
    line-height: 36px;
    letter-spacing: -1px;
}

.paw {
    display: grid;
    width: 50px;
}

.paw svg, .paw b {
    grid-area: 1 / 1;
}

.paw svg {
    fill: #fafafa;
    stroke: #d2d2d2;
}

.paw b {
    align-self: end;
    text-align: center;
    font-size: 19px;
    line-height: 28px;
}

.jy {
    font-size: 27px;
    line-height: 32px;
}

.url {
    margin-top: 1px;
    padding-left: 2px;
    font-size: 18px;
    line-height: 22px;
    letter-spacing: 0.800px;
    -webkit-text-stroke-width: 1px;
}
```
